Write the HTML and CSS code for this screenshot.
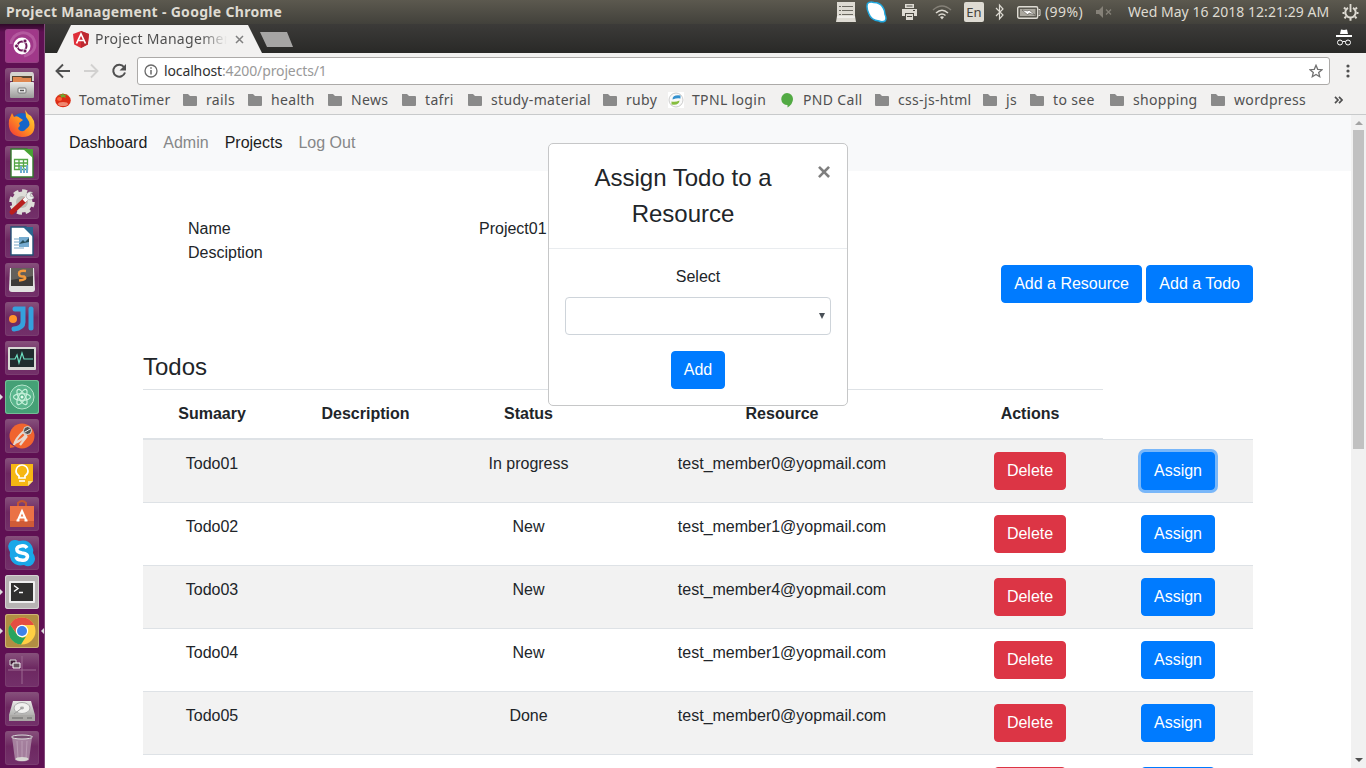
FILE: index.html
```html
<!DOCTYPE html>
<html lang="en">
<head>
<meta charset="utf-8">
<title>Project Management</title>
<link rel="stylesheet" href="styles.css">
</head>
<body>
<svg class="defs" width="0" height="0">
  <defs>
    <symbol id="folder" viewBox="0 0 16 16"><path d="M1 2h5l2 2h6a1 1 0 0 1 1 1v8a1 1 0 0 1-1 1H2a1 1 0 0 1-1-1z" fill="#8a8a8a"/></symbol>
    <linearGradient id="steel" x1="0" y1="0" x2="0" y2="1"><stop offset="0" stop-color="#e8e8e6"/><stop offset="1" stop-color="#9b9b99"/></linearGradient>
    <linearGradient id="fox" x1="1" y1="0" x2="0" y2="1"><stop offset="0" stop-color="#ffe13a"/><stop offset=".5" stop-color="#ff9020"/><stop offset="1" stop-color="#f0303a"/></linearGradient>
  </defs>
</svg>
<div class="desktop">
  <header class="panel">
    <div class="panel-title"><span>Project Management - Google Chrome</span></div>
    <div class="indicators">
      <svg width="20" height="20" viewBox="0 0 20 20"><path d="M1 0h18v14l1 6H0l1-6z" fill="#dedbd3"/><path d="M3 4.500h2M6 4.500h11M3 8.500h2M6 8.500h11M3 12.500h2M6 12.500h11" stroke="#6b6961"/><path d="M1 15h18" stroke="#fff"/></svg>
      <svg width="21" height="22" viewBox="0 0 21 22"><path d="M1.500 2.500Q4 0 8 1.500q6 0 9 5 2 3 2 7 2 4 0 6.500-3 1.500-6 0Q5 19 3 13 0 7 1.500 2.500z" fill="#fff" stroke="#21a7dd" stroke-width="1.500"/></svg>
      <svg width="17" height="16" viewBox="0 0 17 16"><path d="M4 0h9v4H4zM1 5h15v7h-3V9H4v3H1zM5 10h7v6H5z" fill="#dedbd3"/><path d="M5.500 2h6M6 12.500h5M12 6.500h2" stroke="#4b4942"/></svg>
      <svg width="20" height="15" viewBox="0 0 20 15" fill="none" stroke="#dedbd3" stroke-width="1.500"><path d="M1 5q9-8 18 0" stroke="#858178"/><path d="M4 8q6-5.500 12 0M6.500 10.500q3.500-3 7 0"/><path d="M8 12q2-1.500 4 0l-2 2.500z" fill="#dedbd3" stroke="none"/></svg>
      <span class="lang">En</span>
      <svg width="10" height="18" viewBox="0 0 10 18" fill="none" stroke="#dedbd3" stroke-width="1.200"><path d="M1 5l7 7-3.500 4V2L8 6l-7 7"/></svg>
      <svg width="24" height="13" viewBox="0 0 24 13"><rect x=".7" y=".7" width="20" height="11.500" rx="1.500" fill="#5b5951" stroke="#dedbd3" stroke-width="1.400"/><rect x="3" y="3" width="15.500" height="7" fill="#aaa79e"/><path d="M21.500 3.500H23v6h-1.500" fill="none" stroke="#dedbd3"/><path d="M5 4l6 1 1-1 6 5-6-2-1 2z" fill="#fff" stroke="#55534b" stroke-width=".6"/></svg>
      <span class="percent">(99%)</span>
      <svg width="17" height="12" viewBox="0 0 17 12"><path d="M0 4h3l4-4v12L3 8H0z" fill="#858178"/><path d="M10 3.500l5 5m0-5l-5 5" stroke="#858178" stroke-width="1.300"/></svg>
      <span class="clock">Wed May 16 2018 12:21:29 AM</span>
      <svg width="17" height="17" viewBox="0 0 17 17" fill="none" stroke="#dedbd3"><path d="M6 3.800a5.200 5.200 0 1 0 5 0" stroke-width="2"/><path d="M8.500 0v8" stroke-width="1.800"/><path d="M3.500 5L2 3.500M2.500 9H.5M4 12.500l-1.500 1.800M8.500 14v2.700M13 12.500l1.500 1.800M14.500 9h2M13.500 5L15 3.500" stroke-width="2"/></svg>
    </div>
  </header>

  <nav class="launcher">
    <div class="tile ubuntu"><svg viewBox="0 0 34 34"><path d="M6 15a12 12 0 0 1 23-4q4 12-10 16" fill="none" stroke="#d28bc0" stroke-width="3" opacity=".4"/><circle cx="17" cy="17" r="8.500" fill="#fff"/><circle cx="17" cy="17" r="4.500" fill="none" stroke="#6d1859" stroke-width="2"/><g fill="#6d1859" stroke="#fff" stroke-width=".8"><circle cx="11.500" cy="17" r="2"/><circle cx="20" cy="12" r="2"/><circle cx="20" cy="22" r="2"/></g></svg></div>
    <div class="tile"><svg viewBox="0 0 34 34"><path d="M7 4h20q2 0 2 4v5H5V8q0-4 2-4z" fill="#d5d4cf"/><path d="M7 8h20v6H7z" fill="#594431"/><path d="M8 9h8l2 1h8v4H8z" fill="#df8750"/><rect x="5" y="14" width="24" height="16" rx="1" fill="url(#steel)"/><rect x="13" y="20" width="8" height="5" rx="1" fill="#eee" stroke="#777"/><path d="M15 22.500h4" stroke="#555" stroke-width="1.500"/></svg></div>
    <div class="tile"><svg viewBox="0 0 34 34"><circle cx="17" cy="16.500" r="10.500" fill="#1565c9"/><path d="M20 3q2 4 6 6l3 5q3 16-12 16Q2 29 4 13l3-7 2 4q3-2 6 1l3 2-4 3 1 3q-3 2-1 4 4 3 7-1 6-4 2-9l-2-3q0-4-1-7z" fill="url(#fox)"/></svg></div>
    <div class="tile"><svg viewBox="0 0 34 34"><path d="M6 3h16l6 7v21H6z" fill="#fff" stroke="#337b2c" stroke-width="1.400"/><path d="M18 3h10v9z" fill="#49a335"/><path d="M9.500 13.500h13v10h-13zM9.500 17h13M9.500 20h13M14 13.500v10M18.500 13.500v10" fill="none" stroke="#54a646" stroke-width="1.300"/><path d="M16 20v7M19 22v5M22 19v8" stroke="#6eadd1" stroke-width="2"/></svg></div>
    <div class="tile"><svg viewBox="0 0 34 34"><circle cx="17" cy="17" r="10.500" fill="#deded9"/><circle cx="17" cy="17" r="11" fill="none" stroke="#deded9" stroke-width="3.500" stroke-dasharray="5 3.600"/><circle cx="17" cy="17" r="6" fill="#bcbcb6"/><path d="M7 27L20 15" stroke="#b91f1d" stroke-width="5" stroke-linecap="round"/><path d="M19 16l6-6" stroke="#f7f7f7" stroke-width="4"/><path d="M28 8a4 4 0 1 0 1 4l-4-1 1-3z" fill="#eee" stroke="#888" stroke-width=".5"/></svg></div>
    <div class="tile"><svg viewBox="0 0 34 34"><path d="M6 3h15l7 8v20H6z" fill="#fff" stroke="#235176" stroke-width="1.400"/><path d="M18 3h10v10z" fill="#2b668e"/><path d="M9 15h10M9 18h10M9 21h10M9 24h10" stroke="#77a6c5"/><path d="M14 13h10v10H14z" fill="#75abd0"/><path d="M14 20l4-4 2 2 4-4v4z" fill="#264e59"/></svg></div>
    <div class="tile"><svg viewBox="0 0 34 34"><path d="M5 5h24l1 21q0 3-3 3H7q-3 0-3-3z" fill="#e2e2e0"/><path d="M6 5h22v18H6z" fill="#3d3b38"/><path d="M6 5h22v8L6 17z" fill="#63605b"/><path d="M21 8q-7-1-7 2.500t5 3q4 3-5 4" fill="none" stroke="#f39b3c" stroke-width="2.500"/></svg></div>
    <div class="tile"><svg viewBox="0 0 34 34" fill="none" stroke="#35a0dc" stroke-width="5" stroke-linecap="round"><path d="M10 7h8v13q0 6-9 7"/><path d="M26 7v19"/><circle cx="8" cy="17" r="4" fill="#ff942b" stroke="none"/></svg></div>
    <div class="tile"><svg viewBox="0 0 34 34"><rect x="3" y="6" width="28" height="23" rx="1" fill="#d8d8d4"/><rect x="5" y="8" width="24" height="18" fill="#202c2e"/><path d="M5 18h5l2-4 2 8 3-10 2 6h9" fill="none" stroke="#6ee1c3" stroke-width="1.200"/></svg></div>
    <div class="tile atom left"><svg viewBox="0 0 34 34"><circle cx="17" cy="17" r="12" fill="#59b58c" stroke="#b5e5cb"/><g fill="none" stroke="#c5f0d9" stroke-width="1.200"><ellipse cx="17" cy="17" rx="8.500" ry="3.300"/><ellipse cx="17" cy="17" rx="8.500" ry="3.300" transform="rotate(60 17 17)"/><ellipse cx="17" cy="17" rx="8.500" ry="3.300" transform="rotate(120 17 17)"/></g><circle cx="17" cy="17" r="1.500" fill="#e5fff0"/></svg></div>
    <div class="tile"><svg viewBox="0 0 34 34"><circle cx="17" cy="17" r="12.500" fill="#f0642f"/><path d="M5 25l5 3-5 1z" fill="#f0642f"/><path d="M9 26q2-7 9-13l3 3q-4 5-11 8M15 26l7-9" fill="none" stroke="#e8d8ce" stroke-width="2.300"/><circle cx="22.500" cy="11.500" r="4" fill="#555" stroke="#ddd"/><path d="M20 13l5-3" stroke="#eee"/></svg></div>
    <div class="tile"><svg viewBox="0 0 34 34"><path d="M6 6h22v17l-5 5H6z" fill="#f6b713"/><path d="M23 28v-5h5z" fill="#fbe18b"/><path d="M14 20v-2q-3-2-3-5a6 6 0 0 1 12 0q0 3-3 5v2zM14 23h6" fill="none" stroke="#fff" stroke-width="1.700"/></svg></div>
    <div class="tile"><svg viewBox="0 0 34 34"><path d="M13 10V6q4-4 8 0v4" fill="none" stroke="#c35531" stroke-width="2"/><path d="M5 9h24v21H5z" fill="#ea7246"/><path d="M5 24h24v6H5z" fill="#cf5b37"/><path d="M13 23l4-9 4 9M14 20.500h6M11.500 23.500h3m5 0h3" fill="none" stroke="#fff" stroke-width="2"/></svg></div>
    <div class="tile"><svg viewBox="0 0 34 34"><path d="M6 5q4-2 8 0 9-2 13 5 2 4 1 7 4 6 0 11-4 4-9 1-9 2-13-5-2-4-1-8-4-7 1-11z" fill="#19a7e8"/><path d="M22 12q-2-3-6-2-5 1-4 4 0 2 5 3 7 1 5 5-1 3-6 2-4 0-5-3" fill="none" stroke="#fff" stroke-width="3.600"/></svg></div>
    <div class="tile terminal left"><svg viewBox="0 0 34 34"><rect x="4" y="6" width="26" height="22" rx="1" fill="#eee"/><rect x="6" y="8" width="22" height="18" fill="#30302f"/><path d="M9 10.500l4 3-4 3M14 17.500h4" fill="none" stroke="#fff" stroke-width="1.400"/></svg></div>
    <div class="tile chrome left right"><svg viewBox="0 0 34 34"><circle cx="17" cy="17" r="13.500" fill="#ffcf43"/><path d="M5 10.500A13.500 13.500 0 0 1 29 11H17l-5 9z" fill="#e44d42"/><path d="M5 10.500l7 10q5 5 9 2l-5 8A13.500 13.500 0 0 1 5 10.500z" fill="#28a45e"/><circle cx="17" cy="17" r="6.200" fill="#fff"/><circle cx="17" cy="17" r="5" fill="#3e82e9"/></svg></div>
    <div class="tile"><svg viewBox="0 0 34 34" fill="none"><path d="M17 3v28M3 17h28" stroke="#9b6890"/><path d="M5 7h6v5H5z" fill="#411c39" stroke="#ddd"/><path d="M8 10h7v5H8z" fill="#65535f" stroke="#fff"/></svg></div>
    <div class="tile"><svg viewBox="0 0 34 34"><path d="M8 9h18l4 14v6H4v-6z" fill="url(#steel)"/><path d="M4 23h26v6H4z" fill="#aaa9a6"/><ellipse cx="17" cy="16" rx="8" ry="5.500" fill="#f1f1ef" stroke="#aaa"/><ellipse cx="17" cy="16" rx="2" ry="1.400" fill="#aaa"/><path d="M17 16l-8 6" stroke="#999"/><path d="M7 26h11M22 26h5" stroke="#666"/></svg></div>
    <div class="tile"><svg viewBox="0 0 34 34"><path d="M7 6l3 23q7 3 14 0l3-23" fill="#b69bb0" opacity=".75"/><path d="M12 10l1 17M17 10v18M22 10l-1 17" stroke="#dac7d5" opacity=".4"/><ellipse cx="17" cy="6" rx="10.500" ry="2" fill="#784d70" stroke="#ddd"/><ellipse cx="17" cy="28" rx="6.500" ry="2" fill="#d8d6d3"/></svg></div>
  </nav>

  <main class="browser">
    <div class="tabs">
      <div class="tab">
        <svg width="16" height="17" viewBox="0 0 16 17"><path d="M8 0l8 3-1.200 10.500L8 17l-6.800-3.500L0 3z" fill="#df2e38"/><path d="M8 0l8 3-1.200 10.500L8 17z" fill="#bd2930"/><path d="M3.500 12.500L8 3l4.500 9.500M5.500 9.500h5" fill="none" stroke="#fff" stroke-width="1.700"/></svg>
        <span class="tab-title">Project Management</span>
        <svg width="9" height="9" viewBox="0 0 9 9"><path d="M1 1l7 7m0-7L1 8" stroke="#808080" stroke-width="1.500"/></svg>
      </div>
      <div class="new-tab"></div>
      <svg class="incognito" width="16" height="17" viewBox="0 0 16 17"><path d="M4 5l1-4.500L8 1l3-.5L12 5zM0 6h16v2H0z" fill="#fff"/><path d="M6.200 13q1.800-1.500 3.600 0" fill="none" stroke="#fff"/><circle cx="4" cy="13.500" r="2.500" fill="none" stroke="#fff"/><circle cx="12" cy="13.500" r="2.500" fill="none" stroke="#fff"/></svg>
    </div>
    <div class="toolbar">
      <svg width="16" height="16" viewBox="0 0 16 16" fill="none" stroke="#505050" stroke-width="1.900"><path d="M15 8H2.500M8 1.500L1.500 8 8 14.500"/></svg>
      <svg width="16" height="16" viewBox="0 0 16 16" fill="none" stroke="#d2d1d0" stroke-width="1.900"><path d="M1 8h12.500M8 1.500L14.500 8 8 14.500"/></svg>
      <svg width="16" height="16" viewBox="0 0 16 16"><path d="M13 4A6 6 0 1 0 14 9.500" fill="none" stroke="#505050" stroke-width="2"/><path d="M15 1v6.500H8.500z" fill="#505050"/></svg>
      <div class="address">
        <svg width="14" height="14" viewBox="0 0 14 14"><circle cx="7" cy="7" r="6" fill="none" stroke="#6a6a6a" stroke-width="1.300"/><path d="M7 6v4.500M7 3.300v1.500" stroke="#6a6a6a" stroke-width="1.500"/></svg>
        <span class="url"><b>localhost</b>:4200/projects/1</span>
        <svg width="14" height="14" viewBox="0 0 14 14"><path d="M7 1.300l1.700 4 4.300.4-3.300 2.800 1 4.200L7 10.500l-3.700 2.200 1-4.200L1 5.700l4.300-.4z" fill="none" stroke="#707070" stroke-width="1.300"/></svg>
      </div>
      <svg width="4" height="14" viewBox="0 0 4 14" fill="#505050"><circle cx="2" cy="2" r="1.600"/><circle cx="2" cy="7" r="1.600"/><circle cx="2" cy="12" r="1.600"/></svg>
    </div>
    <div class="bookmarks">
      <a><svg viewBox="0 0 16 16"><ellipse cx="8" cy="8.500" rx="7.800" ry="6.700" fill="#dd2d16"/><ellipse cx="8" cy="12" rx="5" ry="2" fill="#f08770"/><ellipse cx="4.500" cy="7" rx="2.500" ry="2" fill="#ff6038"/><path d="M8 1l1 2 4-1-3 2 1 2-3-1-2 1V4L3 3l4-.4z" fill="#70a72c"/></svg><span>TomatoTimer</span></a>
      <a><svg><use href="#folder"/></svg><span>rails</span></a>
      <a><svg><use href="#folder"/></svg><span>health</span></a>
      <a><svg><use href="#folder"/></svg><span>News</span></a>
      <a><svg><use href="#folder"/></svg><span>tafri</span></a>
      <a><svg><use href="#folder"/></svg><span>study-material</span></a>
      <a><svg><use href="#folder"/></svg><span>ruby</span></a>
      <a><svg viewBox="0 0 16 16"><path d="M0 0h16v16H0z" fill="#fff"/><circle cx="8" cy="8" r="7" fill="#f9f9f9" stroke="#ccc"/><path d="M12.500 3.500q-8-1-8 4 5-2 8-1z" fill="#3491cf"/><path d="M3.500 12.500q8 1 8-4-4 2-8 1z" fill="#86bd3e"/></svg><span>TPNL login</span></a>
      <a><svg viewBox="0 0 16 16"><path d="M8 1a6 6 0 0 1 6 6q0 5-5.500 8.500V13A6 6 0 0 1 8 1z" fill="#52aa43"/></svg><span>PND Call</span></a>
      <a><svg><use href="#folder"/></svg><span>css-js-html</span></a>
      <a><svg><use href="#folder"/></svg><span>js</span></a>
      <a><svg><use href="#folder"/></svg><span>to see</span></a>
      <a><svg><use href="#folder"/></svg><span>shopping</span></a>
      <a><svg><use href="#folder"/></svg><span>wordpress</span></a>
      <svg class="more" width="9" height="8" viewBox="0 0 9 8"><path d="M1 .8L4 4 1 7.200M5 .8L8 4 5 7.200" fill="none" stroke="#505050" stroke-width="1.700"/></svg>
    </div>

    <div class="viewport">
      <div class="page">
        <nav class="navbar"><a class="active">Dashboard</a><a>Admin</a><a class="active">Projects</a><a>Log Out</a></nav>
        <div class="container">
          <dl class="details"><dt>Name</dt><dd>Project01</dd><dt>Desciption</dt><dd></dd></dl>
          <div class="actions"><button class="btn">Add a Resource</button><button class="btn">Add a Todo</button></div>
          <h4>Todos</h4>
          <table class="table">
            <colgroup><col class="c1"><col class="c2"><col class="c3"><col class="c4"><col class="c5"><col class="c6"></colgroup>
            <thead><tr><th>Sumaary</th><th>Description</th><th>Status</th><th>Resource</th><th>Actions</th></tr></thead>
            <tbody>
              <tr><td>Todo01</td><td></td><td>In progress</td><td>test_member0@yopmail.com</td><td><button class="btn danger">Delete</button></td><td><button class="btn focused">Assign</button></td></tr>
              <tr><td>Todo02</td><td></td><td>New</td><td>test_member1@yopmail.com</td><td><button class="btn danger">Delete</button></td><td><button class="btn">Assign</button></td></tr>
              <tr><td>Todo03</td><td></td><td>New</td><td>test_member4@yopmail.com</td><td><button class="btn danger">Delete</button></td><td><button class="btn">Assign</button></td></tr>
              <tr><td>Todo04</td><td></td><td>New</td><td>test_member1@yopmail.com</td><td><button class="btn danger">Delete</button></td><td><button class="btn">Assign</button></td></tr>
              <tr><td>Todo05</td><td></td><td>Done</td><td>test_member0@yopmail.com</td><td><button class="btn danger">Delete</button></td><td><button class="btn">Assign</button></td></tr>
              <tr><td></td><td></td><td></td><td></td><td><button class="btn danger">Delete</button></td><td><button class="btn">Assign</button></td></tr>
            </tbody>
          </table>
        </div>
        <section class="modal">
          <div class="modal-header"><h4>Assign Todo to a Resource</h4><button class="close">×</button></div>
          <div class="modal-body"><label>Select</label><div class="select"><svg width="6" height="6" viewBox="0 0 6 6"><path d="M0 0h6L3 6z" fill="#495057"/></svg></div><button class="btn">Add</button></div>
        </section>
      </div>
      <div class="scrollbar"><i class="up"></i><div class="thumb"></div><i class="down"></i></div>
    </div>
  </main>
</div>
</body>
</html>
```
FILE: styles.css
```css
* { box-sizing: border-box; }
body { margin: 0; overflow: hidden; font: 16px/1.5 "Liberation Sans", Arial, sans-serif; color: #212529; }
svg { display: block; flex: none; }
.defs { position: absolute; }
.desktop { display: grid; grid-template: 24px 744px / 45px 1321px; width: 1366px; height: 768px; overflow: hidden; }

.panel { grid-column: 1 / 3; display: grid; grid-template-columns: 836px 530px; background: linear-gradient(#5c594f, #42413b); color: #dfdbd2; font: 14px/24px "Noto Sans", sans-serif; }
.panel-title { padding-left: 6px; font-weight: 700; letter-spacing: .31px; white-space: nowrap; }
.indicators { display: grid; grid-template-columns: 30px 35px 31px 32px 31px 22px 28px 51px 32px 214px 24px; align-items: center; white-space: nowrap; }
.lang { width: 20px; height: 20px; border-radius: 2px; background: #dedbd3; color: #45433d; font-size: 13px; line-height: 20px; text-align: center; }
.percent { letter-spacing: .4px; }
.clock { letter-spacing: .03px; }

.launcher { display: flex; flex-direction: column; gap: 5px; padding: 5px 0 0 5px; background: linear-gradient(#2f0928 0, #5f1053 8px); border-right: 1px solid #83497a; }
.tile { position: relative; flex: none; width: 34px; height: 34px; border-radius: 3px; background: linear-gradient(#87517c, #6d2861 45%, #73306a); box-shadow: inset 0 0 0 1px #8550796b; }
.tile svg { width: 34px; height: 34px; }
.ubuntu { background: #a03889; }
.atom { background: #45a076; box-shadow: inset 0 0 0 1px #74bd96; }
.terminal { background: #b7b3b3; box-shadow: inset 0 0 0 1px #d5d1d2; }
.chrome { background: #b18e43; box-shadow: inset 0 0 0 1px #cdb476; }
.left::before, .right::after { content: ""; position: absolute; top: 14px; border: 3px solid transparent; }
.left::before { left: -5px; border-left-color: #ddd; border-right: 0; }
.right::after { right: -5px; border-right-color: #ddd; border-left: 0; }

.browser { display: grid; grid-template-rows: 29px 34px 28px 653px; min-width: 0; font-family: "Noto Sans", sans-serif; }
.tabs { display: flex; background: linear-gradient(#3c3b39, #292927); }
.tab { display: flex; align-items: center; width: 206px; height: 28px; margin: 1px 0 0 12px; padding-left: 16px; gap: 6px; background: #f2f1f0; clip-path: polygon(14px 0, 191px 0, 205px 100%, 0 100%); }
.tab-title { width: 132px; margin-right: 2px; overflow: hidden; font-size: 14px; line-height: 20px; letter-spacing: .3px; color: #505050; white-space: nowrap; -webkit-mask-image: linear-gradient(90deg, #000 80%, transparent); mask-image: linear-gradient(90deg, #000 80%, transparent); }
.new-tab { width: 33px; height: 15px; margin: 8px 0 0 -3px; background: #a6a5a4; clip-path: polygon(0 0, 27px 0, 33px 100%, 7px 100%); }
.incognito { margin: 5px 14px 0 auto; }
.toolbar { display: flex; align-items: center; padding: 1px 15px 0 10px; background: #f2f1f0; }
.toolbar > svg { margin-right: 12px; }
.toolbar > svg:nth-of-type(3) { margin-right: 10px; }
.toolbar > svg:last-child { margin: 0 0 0 16px; }
.address { display: flex; align-items: center; width: 1193px; height: 28px; padding: 0 6px; border: 1px solid #acaaa8; border-radius: 3px; background: #fff; font-size: 14px; }
.url { flex: 1; margin-left: 6px; letter-spacing: -.13px; color: #999; }
.url b { color: #303030; font-weight: 400; }
.bookmarks { display: grid; grid-template-columns: 128px 65px 80px 74px 66px 135px 66px 111px 95px 108px 47px 80px 101px 123px 10px; align-items: center; padding: 0 0 2px 10px; background: #f2f1f0; border-bottom: 1px solid #c8cacb; font-size: 14px; line-height: 20px; letter-spacing: .33px; color: #505050; }
.bookmarks a { display: flex; align-items: center; gap: 8px; margin-left: -1px; white-space: nowrap; }
.bookmarks a:first-child { margin-left: 0; }
.bookmarks a svg { width: 16px; height: 16px; }

.viewport { display: grid; grid-template-columns: 1306px 15px; overflow: hidden; background: #fff; font-family: "Liberation Sans", Arial, sans-serif; }
.page { position: relative; height: 653px; overflow: hidden; }
.navbar { display: flex; gap: 16px; height: 56px; padding: 16px 24px; background: #f8f9fa; color: #868788; }
.active { color: #1c1d1d; }
.container { width: 1110px; margin: 0 auto; padding-top: 46px; }
.details { display: grid; grid-template-columns: 291px 200px; grid-auto-rows: 24px; margin: 0; padding-left: 45px; }
.details dd { margin: 0; }
.actions { display: flex; justify-content: flex-end; gap: 4.45px; }
h4 { margin: 0; font-size: 24px; font-weight: 400; }
.container h4 { margin-top: 49px; line-height: 29px; margin-bottom: 8px; }
.btn { height: 38px; padding: 6px 12px; border: 1px solid #007bff; border-radius: 4px; background: #007bff; color: #fff; font: inherit; vertical-align: top; }
.danger { background: #dc3545; border-color: #dc3545; }
.focused { box-shadow: 0 0 0 3px rgba(0, 123, 255, .5); }
.table { width: 1110px; table-layout: fixed; border-collapse: collapse; text-align: center; }
.c1 { width: 138px; } .c2 { width: 169px; } .c3 { width: 157px; } .c4 { width: 350px; } .c5 { width: 146px; } .c6 { width: 150px; }
th, td { padding: 12px; border-top: 1px solid #dee2e6; vertical-align: top; }
td:nth-child(4), th { padding-left: 0; padding-right: 0; }
thead th { border-bottom: 2px solid #dee2e6; }
tbody tr:nth-child(odd) { background: #f2f2f2; }

.modal { position: absolute; left: 503px; top: 28px; width: 300px; height: 263px; border: 1px solid #c6c7c8; border-radius: 5px; background: #fff; text-align: center; }
.modal-header { display: flex; align-items: flex-start; height: 105px; padding: 16px; border-bottom: 1px solid #e9ecef; }
.modal-header h4 { flex: 1; line-height: 36px; }
.close { margin: -16px -16px 0 0; padding: 16px; border: 0; background: none; color: #000; font: 700 24px/24px "Liberation Sans", Arial, sans-serif; opacity: .5; }
.modal-body { padding: 16px; }
.modal-body label { display: block; margin-bottom: 8px; }
.select { display: flex; align-items: center; justify-content: flex-end; height: 38px; margin-bottom: 16px; padding-right: 5px; border: 1px solid #ced4da; border-radius: 4px; }

.scrollbar { display: flex; flex-direction: column; align-items: center; background: #f1f1f1; }
.up, .down { border: 4px solid transparent; }
.up { margin-top: 6px; border-top: 0; border-bottom-color: #a3a3a3; }
.thumb { width: 11px; height: 319px; margin-top: 5px; background: #c1c1c1; }
.down { margin: auto 0 6px; border-bottom: 0; border-top-color: #505050; }
```
